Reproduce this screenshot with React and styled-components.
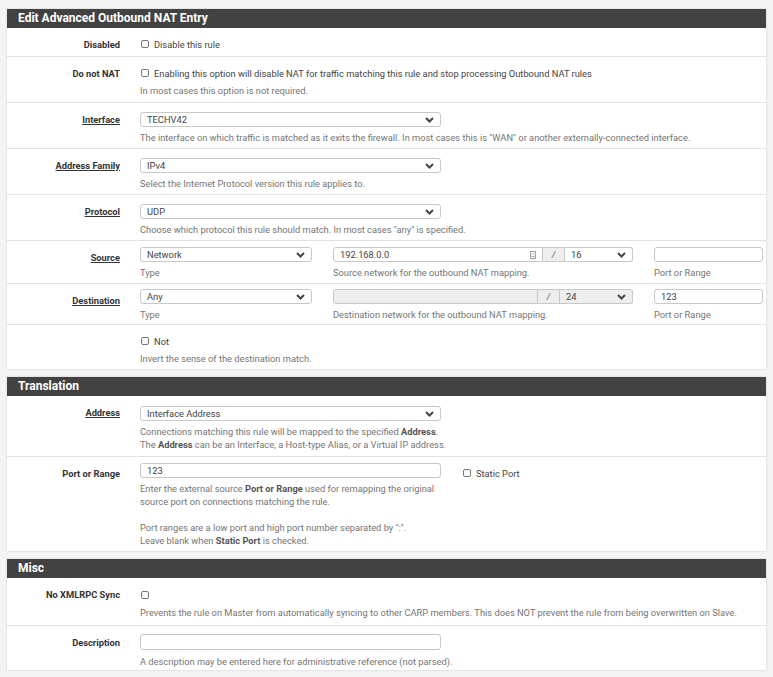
import React from 'react'
import styled, { createGlobalStyle } from 'styled-components'

const GlobalStyle = createGlobalStyle`
  html, body {
    margin: 0;
    padding: 0;
    background: #f4f4f4;
    overflow: hidden;
  }
  body {
    font-family: Roboto, "Liberation Sans", sans-serif;
    color: #333;
  }
`

const Page = styled.div`
  padding: 9px 7px 0;
`

const Panel = styled.section`
  background: #fff;
  box-shadow: 0 0 2px rgba(0, 0, 0, 0.18);
  margin-bottom: 8px;
`

const PanelHeading = styled.h2`
  margin: 0;
  height: 19px;
  line-height: 19px;
  padding: 0 11px;
  background: #424242;
  color: #fff;
  font-size: 12px;
  font-weight: 700;
`

const Row = styled.div`
  display: grid;
  grid-template-columns: 113px 1fr;
  column-gap: 20px;

  & + & {
    border-top: 1px solid #e2e2e2;
  }
`

const Label = styled.div`
  text-align: right;
  font-size: 9.3px;
  font-weight: 700;
  line-height: 12px;
  padding-top: 11px;
  color: #333;
  text-decoration: ${p => (p.$required ? 'underline' : 'none')};
`

const Content = styled.div`
  padding: ${p => p.$pt}px 0 ${p => p.$pb}px;
  min-width: 0;
`

const Help = styled.div`
  margin-top: ${p => p.$mt ?? 4}px;
  font-size: 9.3px;
  line-height: 13px;
  color: #757575;

  b {
    font-weight: 700;
    color: #555;
  }
`

const CheckLine = styled.label`
  display: flex;
  align-items: center;
  height: 14px;
  margin-top: ${p => p.$mt || 0}px;
  font-size: 9.3px;
  color: #444;
  white-space: nowrap;
`

const Box = styled.span`
  width: 6px;
  height: 6px;
  border: 1px solid #777;
  border-radius: 2px;
  margin: 0 5px 0 1px;
  flex: none;
`

const Control = styled.div`
  box-sizing: border-box;
  width: ${p => p.$w}px;
  height: ${p => p.$h || 15}px;
  border: 1px solid #c8c8c8;
  border-radius: 3px;
  background: ${p => (p.$disabled ? '#eee' : '#fff')};
  display: flex;
  align-items: center;
  padding: 0 6px;
  font-size: 9.3px;
  color: #444;
  flex: none;
`

const Value = styled.span`
  flex: 1;
`

const Chevron = () => (
  <svg width="9" height="6" viewBox="0 0 9 6">
    <polyline points="1,1 4.5,4.5 8,1" fill="none" stroke="#444" strokeWidth="2" />
  </svg>
)

const Select = ({ w, value, disabled }) => (
  <Control $w={w} $disabled={disabled}>
    <Value>{value}</Value>
    <Chevron />
  </Control>
)

const Input = ({ w, h, value, disabled, children }) => (
  <Control $w={w} $h={h} $disabled={disabled}>
    <Value>{value}</Value>
    {children}
  </Control>
)

const InputGroup = styled.div`
  display: flex;
  width: 300px;

  & > div:first-child {
    border-radius: 3px 0 0 3px;
  }
  & > div:last-child {
    border-radius: 0 3px 3px 0;
    border-left: none;
  }
`

const Addon = styled.div`
  box-sizing: border-box;
  width: 22px;
  height: 15px;
  background: #eee;
  border: 1px solid #c8c8c8;
  border-left: none;
  display: flex;
  align-items: center;
  justify-content: center;
  font-size: 9px;
  color: #555;
  font-style: italic;
`

const Columns = styled.div`
  display: grid;
  grid-template-columns: 172px 300px 109px;
  column-gap: 21px;
`

const Inline = styled.div`
  display: flex;
  align-items: flex-start;
  gap: 21px;
  height: 15px;
`

const FillIcon = () => (
  <svg width="6" height="8" viewBox="0 0 6 8">
    <rect x="0.5" y="0.5" width="5" height="7" fill="none" stroke="#888" strokeWidth="0.8" />
    <polyline points="1.8,3.5 3,2.3 4.2,3.5" fill="none" stroke="#888" strokeWidth="0.7" />
    <line x1="1.5" y1="5.5" x2="4.5" y2="5.5" stroke="#888" strokeWidth="0.7" />
  </svg>
)

const Field = ({ label, required, pt = 9, pb = 5, children }) => (
  <Row>
    <Label $required={required}>{label}</Label>
    <Content $pt={pt} $pb={pb}>{children}</Content>
  </Row>
)

export default function App() {
  return (
    <Page>
      <GlobalStyle />
      <Panel>
        <PanelHeading>Edit Advanced Outbound NAT Entry</PanelHeading>
        <Field label="Disabled">
          <CheckLine><Box />Disable this rule</CheckLine>
        </Field>
        <Field label="Do not NAT">
          <CheckLine><Box />Enabling this option will disable NAT for traffic matching this rule and stop processing Outbound NAT rules</CheckLine>
          <Help>In most cases this option is not required.</Help>
        </Field>
        <Field label="Interface" required pb={4}>
          <Select w={301} value="TECHV42" />
          <Help>The interface on which traffic is matched as it exits the firewall. In most cases this is "WAN" or another externally-connected interface.</Help>
        </Field>
        <Field label="Address Family" required pb={4}>
          <Select w={301} value="IPv4" />
          <Help>Select the Internet Protocol version this rule applies to.</Help>
        </Field>
        <Field label="Protocol" required pb={4}>
          <Select w={301} value="UDP" />
          <Help>Choose which protocol this rule should match. In most cases "any" is specified.</Help>
        </Field>
        <Field label="Source" required pt={6} pb={4}>
          <Columns>
            <div>
              <Select w={172} value="Network" />
              <Help>Type</Help>
            </div>
            <div>
              <InputGroup>
                <Input w={210} value="192.168.0.0"><FillIcon /></Input>
                <Addon>/</Addon>
                <Select w={68} value="16" />
              </InputGroup>
              <Help>Source network for the outbound NAT mapping.</Help>
            </div>
            <div>
              <Input w={109} value="" />
              <Help>Port or Range</Help>
            </div>
          </Columns>
        </Field>
        <Field label="Destination" required pt={5} pb={3}>
          <Columns>
            <div>
              <Select w={172} value="Any" />
              <Help>Type</Help>
            </div>
            <div>
              <InputGroup>
                <Input w={205} value="" disabled />
                <Addon>/</Addon>
                <Select w={73} value="24" disabled />
              </InputGroup>
              <Help>Destination network for the outbound NAT mapping.</Help>
            </div>
            <div>
              <Input w={109} value="123" />
              <Help>Port or Range</Help>
            </div>
          </Columns>
        </Field>
        <Field label="" pb={4}>
          <CheckLine><Box />Not</CheckLine>
          <Help>Invert the sense of the destination match.</Help>
        </Field>
      </Panel>

      <Panel>
        <PanelHeading>Translation</PanelHeading>
        <Field label="Address" required pt={10} pb={5}>
          <Select w={301} value="Interface Address" />
          <Help>
            Connections matching this rule will be mapped to the specified <b>Address</b>.<br />
            The <b>Address</b> can be an Interface, a Host-type Alias, or a Virtual IP address.
          </Help>
        </Field>
        <Field label="Port or Range" pt={6} pb={4}>
          <Inline>
            <Input w={301} value="123" />
            <CheckLine $mt={3}><Box />Static Port</CheckLine>
          </Inline>
          <Help>
            Enter the external source <b>Port or Range</b> used for remapping the original<br />
            source port on connections matching the rule.<br />
            <br />
            Port ranges are a low port and high port number separated by ":".<br />
            Leave blank when <b>Static Port</b> is checked.
          </Help>
        </Field>
      </Panel>

      <Panel>
        <PanelHeading>Misc</PanelHeading>
        <Field label="No XMLRPC Sync" pt={10} pb={6}>
          <CheckLine><Box /></CheckLine>
          <Help>Prevents the rule on Master from automatically syncing to other CARP members. This does NOT prevent the rule from being overwritten on Slave.</Help>
        </Field>
        <Field label="Description" pt={8} pb={2}>
          <Input w={301} h={16} value="" />
          <Help $mt={5}>A description may be entered here for administrative reference (not parsed).</Help>
        </Field>
      </Panel>
    </Page>
  )
}
